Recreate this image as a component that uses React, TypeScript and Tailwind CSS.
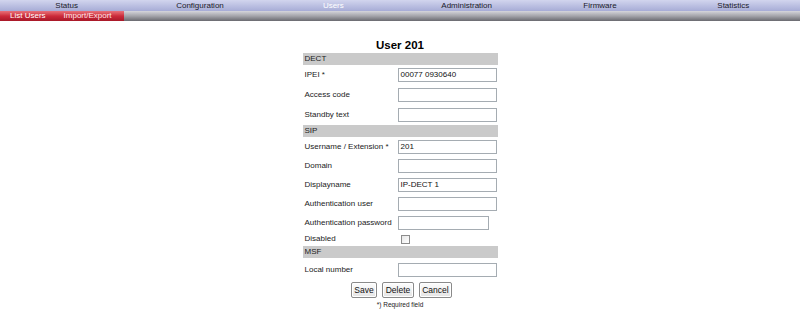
const navItems = ['Status', 'Configuration', 'Users', 'Administration', 'Firmware', 'Statistics'];

type Row =
  | { kind: 'head'; label: string }
  | { kind: 'input'; label: string; value?: string; narrow?: boolean; h: string }
  | { kind: 'check'; label: string };

const rows: Row[] = [
  { kind: 'head', label: 'DECT' },
  { kind: 'input', label: 'IPEI *', value: '00077 0930640', h: 'h-[20px]' },
  { kind: 'input', label: 'Access code', h: 'h-[20px]' },
  { kind: 'input', label: 'Standby text', h: 'h-[20px]' },
  { kind: 'head', label: 'SIP' },
  { kind: 'input', label: 'Username / Extension *', value: '201', h: 'h-[19px]' },
  { kind: 'input', label: 'Domain', h: 'h-[19px]' },
  { kind: 'input', label: 'Displayname', value: 'IP-DECT 1', h: 'h-[19px]' },
  { kind: 'input', label: 'Authentication user', h: 'h-[19px]' },
  { kind: 'input', label: 'Authentication password', narrow: true, h: 'h-[19px]' },
  { kind: 'check', label: 'Disabled' },
  { kind: 'head', label: 'MSF' },
  { kind: 'input', label: 'Local number', h: 'h-[24px]' },
];

function Btn({ label }: { label: string }) {
  return (
    <button className="h-[16px] px-[2.5px] text-[8.5px] leading-none text-[#111] border border-[#8a8a8a] rounded-[2px] bg-gradient-to-b from-[#fdfdfd] to-[#e4e4e4] shadow-[inset_0_0_0_1px_#fff]">
      {label}
    </button>
  );
}

export default function App() {
  return (
    <div className="w-[800px] h-[316px] bg-white overflow-hidden font-['Liberation_Sans',Arial,sans-serif] text-[#222]">
      {/* main nav */}
      <div className="h-[11px] grid grid-cols-6 bg-gradient-to-b from-[#d2d5ee] to-[#a7acd6]">
        {navItems.map((item) => (
          <div
            key={item}
            className={`text-center text-[8px] leading-[11px] ${item === 'Users' ? 'text-white' : 'text-[#1a1a2a]'}`}
          >
            {item}
          </div>
        ))}
      </div>

      {/* sub nav */}
      <div className="h-[10px] flex bg-gradient-to-b from-[#d6d6dc] via-[#a4a4aa] to-[#6a6a70]">
        <div className="w-[124px] flex items-center gap-[18px] pl-[10px] bg-gradient-to-b from-[#e8707a] via-[#cc2a3a] to-[#a81828] text-[8px] leading-none text-white">
          <span>List Users</span>
          <span className="text-[#ffe6e8]">Import/Export</span>
        </div>
      </div>

      <div className="w-[195px] mx-auto pt-[16px]">
        <h1 className="text-center text-[11.5px] font-bold leading-[16px] text-black">User 201</h1>

        {rows.map((row, i) => {
          if (row.kind === 'head') {
            return (
              <div key={i} className="h-[12px] bg-[#cacaca] pl-[2px] text-[8px] leading-[12px]">
                {row.label}
              </div>
            );
          }
          if (row.kind === 'check') {
            return (
              <div key={i} className="h-[14px] flex items-center">
                <div className="w-[95px] pl-[2px] text-[8px]">{row.label}</div>
                <div className="ml-[3px] w-[9px] h-[9px] border border-[#8c8c8c] bg-gradient-to-br from-[#e6e6e6] to-white" />
              </div>
            );
          }
          return (
            <div key={i} className={`${row.h} flex items-center`}>
              <div className="w-[95px] pl-[2px] text-[8px] whitespace-nowrap">{row.label}</div>
              <div
                className={`${row.narrow ? 'w-[91px]' : 'w-[99px]'} h-[14px] border border-[#a5acb2] pl-[2px] text-[8px] leading-[12px] text-[#111]`}
              >
                {row.value}
              </div>
            </div>
          );
        })}

        <div className="flex justify-center gap-[5px] pl-[3px]">
          <Btn label="Save" />
          <Btn label="Delete" />
          <Btn label="Cancel" />
        </div>
        <div className="text-center text-[6.5px] leading-[10px] mt-[2px]">*) Required field</div>
      </div>
    </div>
  );
}
